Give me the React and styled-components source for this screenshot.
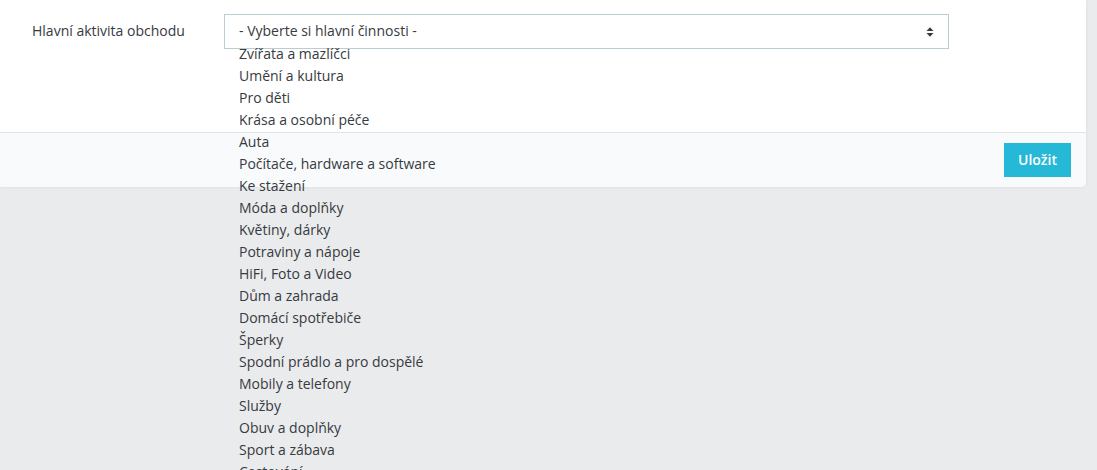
import React from "react";
import styled, { createGlobalStyle } from "styled-components";

const Global = createGlobalStyle`
  html, body { margin: 0; padding: 0; }
  body {
    background: #eaebec;
    font-family: "Open Sans", "Noto Sans", sans-serif;
    font-size: 14px;
    color: #363a41;
    overflow: hidden;
  }
`;

const Page = styled.div`
  width: 1097px;
  height: 470px;
  padding-right: 11px;
  box-sizing: border-box;
`;

const Card = styled.div`
  width: 1086px;
  background: #fff;
  border-radius: 0 0 5px 0;
  box-shadow: 0 0 4px 0 rgba(0, 0, 0, 0.06);
`;

const CardBody = styled.div`
  height: 132px;
  box-sizing: border-box;
  padding-top: 14px;
`;

const FormRow = styled.div`
  display: grid;
  grid-template-columns: 224px 725px;
  align-items: center;
`;

const Label = styled.label`
  padding-left: 32px;
  line-height: 20px;
  margin-top: -2px;
`;

const SelectWrap = styled.div`
  position: relative;
`;

const SelectBox = styled.div`
  height: 35px;
  box-sizing: border-box;
  border: 1px solid #bbcdd2;
  display: flex;
  align-items: center;
  justify-content: space-between;
  padding: 0 14px 0 14px;
  background: #fff;
`;

const SelectText = styled.span`
  line-height: 20px;
  margin-top: -1px;
`;

const Options = styled.ul`
  position: absolute;
  left: 15px;
  top: 29px;
  margin: 0;
  padding: 0;
  list-style: none;
`;

const Option = styled.li`
  line-height: 22px;
  height: 22px;
  white-space: nowrap;
`;

const Footer = styled.div`
  height: 55px;
  box-sizing: border-box;
  border-top: 1px solid #dbe6e9;
  background: #f8fafb;
  border-radius: 0 0 5px 0;
  display: flex;
  justify-content: flex-end;
  align-items: center;
  padding: 0 15px 1px 0;
`;

const Button = styled.button`
  height: 34px;
  width: 67px;
  border: none;
  background: #25b9d7;
  color: #fff;
  font-family: "Open Sans", "Noto Sans", sans-serif;
  font-weight: 600;
  font-size: 14px;
  padding: 0;
  cursor: pointer;
`;

const Caret = () => (
  <svg width="8" height="12" viewBox="0 0 8 12">
    <path d="M0.5 5 L4 1.2 L7.5 5 Z" fill="#363a41" />
    <path d="M0.5 7 L4 10.8 L7.5 7 Z" fill="#363a41" />
  </svg>
);

const items = [
  "Zvířata a mazlíčci",
  "Umění a kultura",
  "Pro děti",
  "Krása a osobní péče",
  "Auta",
  "Počítače, hardware a software",
  "Ke stažení",
  "Móda a doplňky",
  "Květiny, dárky",
  "Potraviny a nápoje",
  "HiFi, Foto a Video",
  "Dům a zahrada",
  "Domácí spotřebiče",
  "Šperky",
  "Spodní prádlo a pro dospělé",
  "Mobily a telefony",
  "Služby",
  "Obuv a doplňky",
  "Sport a zábava",
  "Cestování",
];

export default function App() {
  return (
    <>
      <Global />
      <Page>
        <Card>
          <CardBody>
            <FormRow>
              <Label>Hlavní aktivita obchodu</Label>
              <SelectWrap>
                <SelectBox>
                  <SelectText>- Vyberte si hlavní činnosti -</SelectText>
                  <Caret />
                </SelectBox>
                <Options>
                  {items.map((t) => (
                    <Option key={t}>{t}</Option>
                  ))}
                </Options>
              </SelectWrap>
            </FormRow>
          </CardBody>
          <Footer>
            <Button>Uložit</Button>
          </Footer>
        </Card>
      </Page>
    </>
  );
}
